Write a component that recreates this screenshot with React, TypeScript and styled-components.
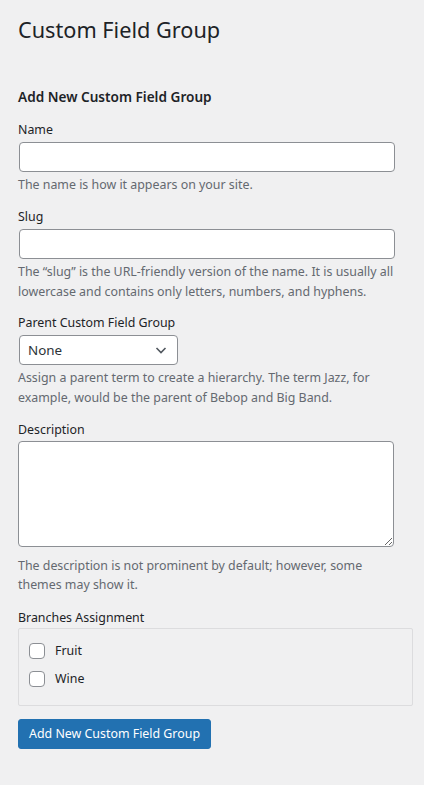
import React from "react";
import styled, { createGlobalStyle } from "styled-components";

const GlobalStyle = createGlobalStyle`
  html, body {
    margin: 0;
    padding: 0;
    background: #f0f0f1;
  }
  body {
    font-family: "Noto Sans", "Open Sans", sans-serif;
    font-size: 12.4px;
    line-height: 18.2px;
    color: #1d2327;
  }
`;

const Wrap = styled.div`
  padding: 10px 18px 36px 18px;
  min-height: 739px;
`;

const Title = styled.h1`
  margin: 5px 0 0 0;
  font-size: 21.7px;
  font-weight: 400;
  line-height: 30px;
  color: #1d2327;
`;

const FormTitle = styled.h2`
  margin: 43px 0 0 0;
  font-size: 13.6px;
  font-weight: 600;
  line-height: 18.2px;
`;

const Field = styled.div`
  display: flex;
  flex-direction: column;
  margin-top: ${(p: { $top: number }) => p.$top}px;
`;

const Label = styled.label`
  display: block;
  font-size: 12.4px;
  line-height: 18.2px;
  margin-bottom: ${(p: { $gap?: number }) => p.$gap ?? 3}px;
`;

const TextInput = styled.input`
  box-sizing: border-box;
  width: 376px;
  height: 30px;
  margin: 0 0 0 1px;
  padding: 0 8px;
  border: 1px solid #8c8f94;
  border-radius: 4px;
  background: #fff;
  font: inherit;
`;

const SelectBox = styled.div`
  box-sizing: border-box;
  width: 159px;
  height: 30px;
  margin-left: 1px;
  padding: 0 8px 0 8px;
  border: 1px solid #8c8f94;
  border-radius: 4px;
  background: #fff;
  display: flex;
  align-items: center;
  justify-content: space-between;
  font-size: 13.4px;
  color: #2c3338;
`;

const TextArea = styled.textarea`
  box-sizing: border-box;
  width: 376px;
  height: 106px;
  margin: 0;
  padding: 4px 8px;
  border: 1px solid #8c8f94;
  border-radius: 4px;
  background: #fff;
  font: inherit;
  resize: vertical;
  display: block;
`;

const Help = styled.p`
  margin: ${(p: { $top: number }) => p.$top}px 0 0 0;
  font-size: 12.4px;
  line-height: 19.5px;
  color: #646970;
  max-width: 380px;
`;

const ChoiceBox = styled.div`
  box-sizing: border-box;
  width: 395px;
  height: 78px;
  border: 1px solid #dcdcde;
  border-radius: 2px;
  padding: 14px 10px;
  display: flex;
  flex-direction: column;
  gap: 12px;
`;

const Choice = styled.label`
  display: flex;
  align-items: center;
  gap: 10px;
  font-size: 12.4px;
  line-height: 16px;
`;

const Check = styled.span`
  box-sizing: border-box;
  width: 16px;
  height: 16px;
  border: 1px solid #8c8f94;
  border-radius: 4px;
  background: #fff;
  display: inline-block;
`;

const Button = styled.button`
  margin-top: 13px;
  height: 30px;
  padding: 0 10px;
  border: 1px solid #2271b1;
  border-radius: 3px;
  background: #2271b1;
  color: #fff;
  font: inherit;
  font-size: 12.4px;
  cursor: pointer;
`;

const Chevron = () => (
  <svg width="16" height="16" viewBox="0 0 16 16" fill="none">
    <path d="M3.5 6l4.5 4.5L12.5 6" stroke="#50575e" strokeWidth="1.6" />
  </svg>
);

export default function App() {
  return (
    <>
      <GlobalStyle />
      <Wrap>
        <Title>Custom Field Group</Title>
        <FormTitle>Add New Custom Field Group</FormTitle>

        <Field $top={15}>
          <Label>Name</Label>
          <TextInput type="text" />
          <Help $top={3}>The name is how it appears on your site.</Help>
        </Field>

        <Field $top={13}>
          <Label>Slug</Label>
          <TextInput type="text" />
          <Help $top={3}>
            The “slug” is the URL-friendly version of the name. It is usually all
            lowercase and contains only letters, numbers, and hyphens.
          </Help>
        </Field>

        <Field $top={13}>
          <Label>Parent Custom Field Group</Label>
          <SelectBox>
            <span>None</span>
            <Chevron />
          </SelectBox>
          <Help $top={3}>
            Assign a parent term to create a hierarchy. The term Jazz, for
            example, would be the parent of Bebop and Big Band.
          </Help>
        </Field>

        <Field $top={14}>
          <Label $gap={1}>Description</Label>
          <TextArea />
          <Help $top={9}>
            The description is not prominent by default; however, some themes
            may show it.
          </Help>
        </Field>

        <Field $top={14}>
          <Label $gap={1}>Branches Assignment</Label>
          <ChoiceBox>
            <Choice>
              <Check />
              Fruit
            </Choice>
            <Choice>
              <Check />
              Wine
            </Choice>
          </ChoiceBox>
        </Field>

        <Button>Add New Custom Field Group</Button>
      </Wrap>
    </>
  );
}
